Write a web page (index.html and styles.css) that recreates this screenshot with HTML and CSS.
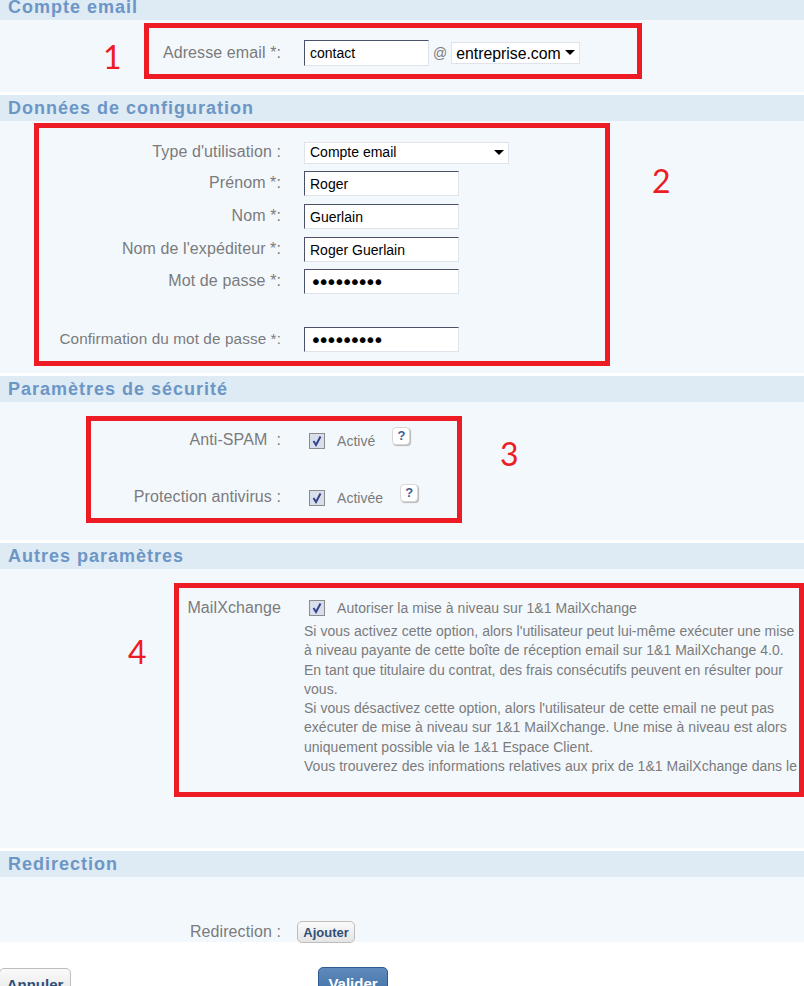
FILE: index.html
```html
<!DOCTYPE html>
<html lang="fr">
<head>
    <meta charset="UTF-8">
    <title>Compte email</title>
    <link rel="stylesheet" href="styles.css">
</head>
<body>
    <div class="page">
        <!-- Compte email -->
        <h2 class="band">Compte email</h2>
        <div class="panel panel-account">
            <div class="row">
                <label>Adresse email *:</label>
                <input class="field field-short" type="text" value="contact">
                <span class="at">@</span>
                <div class="select select-domain">
                    <select><option>entreprise.com</option></select>
                </div>
            </div>
            <div class="note note-1"></div>
            <span class="num num-1">1</span>
        </div>

        <!-- Données de configuration -->
        <h2 class="band">Données de configuration</h2>
        <div class="panel panel-config">
            <div class="row row-type">
                <label>Type d'utilisation :</label>
                <div class="select select-type">
                    <select><option>Compte email</option></select>
                </div>
            </div>
            <div class="row">
                <label>Prénom *:</label>
                <input class="field" type="text" value="Roger">
            </div>
            <div class="row">
                <label>Nom *:</label>
                <input class="field" type="text" value="Guerlain">
            </div>
            <div class="row row-tight">
                <label>Nom de l'expéditeur *:</label>
                <input class="field" type="text" value="Roger Guerlain">
            </div>
            <div class="row row-far">
                <label>Mot de passe *:</label>
                <input class="field field-password" type="password" value="123456789">
            </div>
            <div class="row">
                <label class="label-long">Confirmation du mot de passe *:</label>
                <input class="field field-password" type="password" value="123456789">
            </div>
            <div class="note note-2"></div>
            <span class="num num-2">2</span>
        </div>

        <!-- Paramètres de sécurité -->
        <h2 class="band">Paramètres de sécurité</h2>
        <div class="panel panel-security">
            <div class="row row-check">
                <label>Anti-SPAM &nbsp;:</label>
                <span class="check">
                    <svg viewBox="0 0 14 14"><path d="M3.5 7 L6 11 L10.5 2.5" /></svg>
                </span>
                <span class="check-text">Activé</span>
                <span class="help">?</span>
            </div>
            <div class="row row-check">
                <label>Protection antivirus :</label>
                <span class="check">
                    <svg viewBox="0 0 14 14"><path d="M3.5 7 L6 11 L10.5 2.5" /></svg>
                </span>
                <span class="check-text">Activée</span>
                <span class="help">?</span>
            </div>
            <div class="note note-3"></div>
            <span class="num num-3">3</span>
        </div>

        <!-- Autres paramètres -->
        <h2 class="band">Autres paramètres</h2>
        <div class="panel panel-other">
            <div class="row row-mail">
                <label>MailXchange</label>
                <span class="check">
                    <svg viewBox="0 0 14 14"><path d="M3.5 7 L6 11 L10.5 2.5" /></svg>
                </span>
                <span class="check-text">Autoriser la mise à niveau sur 1&amp;1 MailXchange</span>
            </div>
            <p class="info">
                Si vous activez cette option, alors l'utilisateur peut lui-même exécuter une mise
                à niveau payante de cette boîte de réception email sur 1&amp;1 MailXchange 4.0.<br>
                En tant que titulaire du contrat, des frais consécutifs peuvent en résulter pour vous.<br>
                Si vous désactivez cette option, alors l'utilisateur de cette email ne peut pas
                exécuter de mise à niveau sur 1&amp;1 MailXchange. Une mise à niveau est alors
                uniquement possible via le 1&amp;1 Espace Client.<br>
                Vous trouverez des informations relatives aux prix de 1&amp;1 MailXchange dans le
            </p>
            <div class="note note-4"></div>
            <span class="num num-4">4</span>
        </div>

        <!-- Redirection -->
        <h2 class="band">Redirection</h2>
        <div class="panel panel-redirect">
            <div class="row">
                <label>Redirection :</label>
                <button class="button button-add">Ajouter</button>
            </div>
        </div>

        <div class="actions">
            <button class="button button-cancel">Annuler</button>
            <button class="button button-submit">Valider</button>
        </div>
    </div>
</body>
</html>
```

FILE: styles.css
```css
html, body {
    margin: 0;
    padding: 0;
    height: 100%;
    overflow: hidden;
    background: #fff;
}
body {
    font-family: "Liberation Sans", Arial, sans-serif;
    font-size: 14px;
    color: #7b7b7b;
}
.page {
    margin-top: -6px;
}

/* sections */
.band {
    margin: 0;
    height: 26px;
    padding-left: 8px;
    background: #deeaf4;
    color: #6c96c6;
    font-size: 18px;
    font-weight: bold;
    letter-spacing: 1px;
    line-height: 26px;
}
.panel {
    position: relative;
    background: #f3f8fd;
    margin-bottom: 3px;
}
.panel-account {
    height: 52px;
    padding-top: 20px;
}
.panel-config {
    height: 231px;
    padding-top: 21px;
}
.panel-security {
    height: 112px;
    padding-top: 26px;
}
.panel-other {
    height: 251px;
    padding-top: 28px;
}
.panel-redirect {
    height: 21px;
    padding-top: 44px;
    margin-bottom: 0;
}

/* form rows */
.row {
    display: flex;
    align-items: center;
    margin-bottom: 8px;
}
.row label {
    width: 281px;
    margin-right: 23px;
    flex: none;
    font-size: 16px;
    letter-spacing: 0.1px;
    text-align: right;
    white-space: nowrap;
}
.panel-config .row label,
.panel-security .row label {
    padding-bottom: 2px;
}
.row .label-long {
    font-size: 15.3px;
}
.row-type {
    margin-bottom: 7px;
}
.row-tight {
    margin-bottom: 7px;
}
.row-far {
    margin-bottom: 33px;
}
.row-check {
    height: 26px;
    margin-bottom: 31px;
}
.row-mail {
    height: 22px;
    margin-bottom: 0;
}
.panel-redirect .row label {
    margin-right: 16px;
}
.field {
    box-sizing: border-box;
    width: 155px;
    height: 25px;
    padding: 0 5px;
    border: 1px solid #dfe3ea;
    border-top-color: #4a5068;
    border-left-color: #4a5068;
    background: #fff;
    color: #000;
    font-family: inherit;
    font-size: 14px;
    outline: none;
}
.field-short {
    width: 125px;
    height: 26px;
}
.field-password {
    font-family: "DejaVu Sans", sans-serif;
    font-size: 20px;
    letter-spacing: -4px;
}
.at {
    margin: 0 4px;
    font-size: 14px;
}
.select {
    position: relative;
    box-sizing: border-box;
    height: 22px;
    border: 1px solid #e0e4ea;
    background: #fff;
}
.select select {
    appearance: none;
    width: 100%;
    height: 100%;
    padding: 0 0 0 5px;
    border: none;
    background: transparent;
    color: #000;
    font-family: inherit;
    font-size: 14px;
}
.select::after {
    content: "";
    position: absolute;
    right: 4px;
    top: 7px;
    border: 5px solid transparent;
    border-top-color: #000;
    border-bottom: none;
}
.select-domain {
    width: 129px;
}
.select-domain select {
    padding-left: 4px;
    font-size: 15.8px;
}
.select-type {
    width: 205px;
}
.select-type select {
    padding-bottom: 2px;
}

/* checkboxes and help */
.check {
    box-sizing: border-box;
    width: 16px;
    height: 16px;
    margin-left: 5px;
    flex: none;
    border: 1px solid #8c8c8c;
    background: #d9deeb;
}
.check svg {
    display: block;
    width: 14px;
    height: 14px;
}
.check path {
    fill: none;
    stroke: #33438c;
    stroke-width: 2;
}
.check-text {
    margin-left: 12px;
    font-size: 14px;
    letter-spacing: 0.04px;
    white-space: nowrap;
}
.help {
    box-sizing: border-box;
    width: 18px;
    height: 18px;
    margin: 0 0 10px 17px;
    border: 1px solid #d8d8d8;
    border-radius: 4px;
    background: #fff;
    box-shadow: 1px 1px 1px #b5b5b5;
    color: #3f5f8f;
    font-size: 13px;
    font-weight: bold;
    line-height: 16px;
    text-align: center;
}
.info {
    width: 497px;
    margin: 3px 0 0 304px;
    font-size: 14px;
    letter-spacing: 0.025px;
    line-height: 19.3px;
}

/* buttons */
.button {
    border-radius: 5px;
    font-family: inherit;
    font-size: 13px;
    font-weight: bold;
    cursor: pointer;
}
.button-add {
    width: 58px;
    height: 22px;
    padding: 0;
    border: 1px solid #bdbdbd;
    background: linear-gradient(#fafafa, #e4e4e4);
    color: #2f4f78;
}
.actions {
    display: flex;
    align-items: flex-start;
    padding-top: 25px;
}
.button-cancel {
    width: 72px;
    height: 32px;
    margin: 1px 0 0 -1px;
    padding: 0;
    border: 1px solid #bdbdbd;
    background: linear-gradient(#fafafa, #e4e4e4);
    color: #2f4f78;
    font-size: 15px;
}
.button-submit {
    width: 70px;
    height: 32px;
    margin-left: 247px;
    padding: 0;
    border: 1px solid #2f5a8f;
    background: linear-gradient(#5f8abb, #3f6ea6);
    color: #fff;
    font-size: 15px;
}

/* red annotations drawn over the form */
.note {
    position: absolute;
    box-sizing: border-box;
    border: 5px solid #ed1c24;
}
.note-1 {
    left: 144px;
    top: 3px;
    width: 498px;
    height: 56px;
}
.note-2 {
    left: 34px;
    top: 2px;
    width: 576px;
    height: 243px;
}
.note-3 {
    left: 86px;
    top: 14px;
    width: 376px;
    height: 107px;
}
.note-4 {
    left: 174px;
    top: 14px;
    width: 630px;
    height: 214px;
}
.num {
    position: absolute;
    color: #ed1c24;
    font-family: Lato, sans-serif;
    font-size: 32px;
    line-height: 38px;
}
.num-1 {
    left: 103px;
    top: 18px;
}
.num-2 {
    left: 652px;
    top: 41px;
}
.num-3 {
    left: 500px;
    top: 33px;
}
.num-4 {
    left: 128px;
    top: 64px;
}
```
